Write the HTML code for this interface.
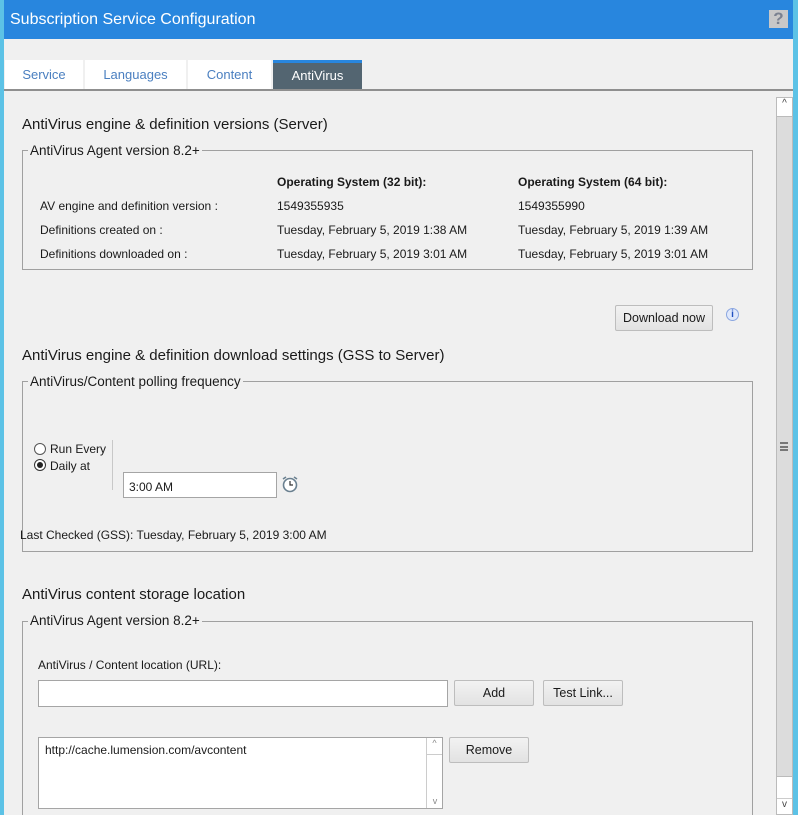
<!DOCTYPE html>
<html><head><style>
*{margin:0;padding:0;box-sizing:border-box}
html,body{width:798px;height:815px;overflow:hidden}
body{background:#f0f0f0;font-family:"Liberation Sans",sans-serif;color:#1a1a1a;position:relative;font-size:12px}
.a{position:absolute}
.title{left:0;top:0;width:798px;height:39px;background:#2886de;color:#fff;font-size:16px;padding:11px 0 0 10px}
.lstrip{left:0;top:0;width:4px;height:815px;background:#5cc2e6}
.rstrip{left:793px;top:0;width:5px;height:815px;background:#5cc2e6}
.tab{top:60px;height:29px;background:#fff;color:#4a7fc0;font-size:13px;text-align:center;line-height:30px}
.h{font-size:15px;color:#1a1a1a}
.box{border:1px solid #a0a0a0}
.leg{background:#f0f0f0;font-size:13.5px;padding:0 2px}
.btn{background:linear-gradient(#f2f2f2,#e2e2e2);border:1px solid #bdbdbd;border-radius:2px;font-size:12.5px;text-align:center}
.inp{background:#fff;border:1px solid #a5a5a5}
b{font-weight:bold}
</style></head><body>
<div class="a title">Subscription Service Configuration</div>
<div class="a" style="left:769px;top:10px;width:19px;height:18px;background:#c8c8c8;color:#7a8190;font-weight:bold;font-size:17px;text-align:center;line-height:18px">?</div>
<div class="a lstrip"></div><div class="a rstrip"></div>
<div class="a tab" style="left:5px;width:78px">Service</div>
<div class="a tab" style="left:85px;width:101px">Languages</div>
<div class="a tab" style="left:188px;width:83px">Content</div>
<div class="a tab" style="left:273px;width:89px;top:60px;background:#536571;color:#fff;border-top:3px solid #2886de;line-height:26px">AntiVirus</div>
<div class="a" style="left:4px;top:89px;width:789px;height:2px;background:#8f8f8f"></div>

<div class="a h" style="left:22px;top:116px">AntiVirus engine &amp; definition versions (Server)</div>
<div class="a box" style="left:22px;top:150px;width:731px;height:120px"></div>
<div class="a leg" style="left:28px;top:143px">AntiVirus Agent version 8.2+</div>
<div class="a" style="left:277px;top:175px"><b>Operating System (32 bit):</b></div>
<div class="a" style="left:518px;top:175px"><b>Operating System (64 bit):</b></div>
<div class="a" style="left:40px;top:199px">AV engine and definition version :</div>
<div class="a" style="left:277px;top:199px">1549355935</div>
<div class="a" style="left:518px;top:199px">1549355990</div>
<div class="a" style="left:40px;top:223px">Definitions created on :</div>
<div class="a" style="left:277px;top:223px">Tuesday, February 5, 2019 1:38 AM</div>
<div class="a" style="left:518px;top:223px">Tuesday, February 5, 2019 1:39 AM</div>
<div class="a" style="left:40px;top:247px">Definitions downloaded on :</div>
<div class="a" style="left:277px;top:247px">Tuesday, February 5, 2019 3:01 AM</div>
<div class="a" style="left:518px;top:247px">Tuesday, February 5, 2019 3:01 AM</div>

<div class="a btn" style="left:615px;top:305px;width:98px;height:26px;line-height:24px">Download now</div>
<div class="a" style="left:726px;top:308px;width:13px;height:13px;border-radius:50%;background:#dfe8fb;border:1px solid #8aa6e0;color:#2050c0;font-size:10px;font-weight:bold;text-align:center;line-height:11px">i</div>

<div class="a h" style="left:22px;top:347px">AntiVirus engine &amp; definition download settings (GSS to Server)</div>
<div class="a box" style="left:22px;top:381px;width:731px;height:171px"></div>
<div class="a leg" style="left:28px;top:374px">AntiVirus/Content polling frequency</div>
<div class="a" style="left:34px;top:443px;width:12px;height:12px;border:1px solid #555;border-radius:50%;background:#fff"></div>
<div class="a" style="left:50px;top:442px">Run Every</div>
<div class="a" style="left:34px;top:459px;width:12px;height:12px;border:1px solid #333;border-radius:50%;background:#fff"><div style="margin:2px;width:6px;height:6px;border-radius:50%;background:#222"></div></div>
<div class="a" style="left:50px;top:459px">Daily at</div>
<div class="a" style="left:112px;top:440px;width:1px;height:50px;background:#c8c8c8"></div>
<div class="a inp" style="left:123px;top:472px;width:154px;height:26px;padding:7px 0 0 5px">3:00 AM</div>
<svg class="a" style="left:281px;top:475px" width="18" height="18" viewBox="0 0 18 18"><circle cx="9" cy="10" r="6.5" fill="#fff" stroke="#6a8090" stroke-width="1.6"/><path d="M9 6v4h3" stroke="#333" stroke-width="1.2" fill="none"/><path d="M2 4l3-2M16 4l-3-2" stroke="#6a8090" stroke-width="1.6"/></svg>
<div class="a" style="left:20px;top:528px">Last Checked (GSS): Tuesday, February 5, 2019 3:00 AM</div>

<div class="a h" style="left:22px;top:586px">AntiVirus content storage location</div>
<div class="a box" style="left:22px;top:621px;width:731px;height:200px"></div>
<div class="a leg" style="left:28px;top:613px">AntiVirus Agent version 8.2+</div>
<div class="a" style="left:38px;top:658px">AntiVirus / Content location (URL):</div>
<div class="a inp" style="left:38px;top:680px;width:410px;height:27px"></div>
<div class="a btn" style="left:454px;top:680px;width:80px;height:26px;line-height:24px">Add</div>
<div class="a btn" style="left:543px;top:680px;width:80px;height:26px;line-height:24px">Test Link...</div>
<div class="a inp" style="left:38px;top:737px;width:405px;height:72px;padding:5px 0 0 6px">http://cache.lumension.com/avcontent
<div class="a" style="right:0;top:0;width:16px;height:70px;border-left:1px solid #ccc;font-size:9px;color:#888;text-align:center"><div style="border-bottom:1px solid #ccc;height:17px">^</div><div style="position:absolute;bottom:2px;width:16px">v</div></div></div>
<div class="a btn" style="left:449px;top:737px;width:80px;height:26px;line-height:24px">Remove</div>

<div class="a" style="left:776px;top:97px;width:17px;height:718px;background:#fff;border:1px solid #bbb"></div>
<div class="a" style="left:777px;top:98px;width:15px;height:17px;text-align:center;font-size:10px;color:#444">^</div>
<div class="a" style="left:777px;top:116px;width:15px;height:661px;background:#dcdcdc;border-top:1px solid #bbb;border-bottom:1px solid #bbb"></div>
<div class="a" style="left:780px;top:442px;width:8px;height:9px;border-top:2px solid #777;border-bottom:2px solid #777"><div style="margin-top:1.5px;height:2px;background:#777"></div></div>
<div class="a" style="left:777px;top:798px;width:15px;height:17px;border-top:1px solid #ccc;text-align:center;font-size:10px;color:#444">v</div>
</body></html>
